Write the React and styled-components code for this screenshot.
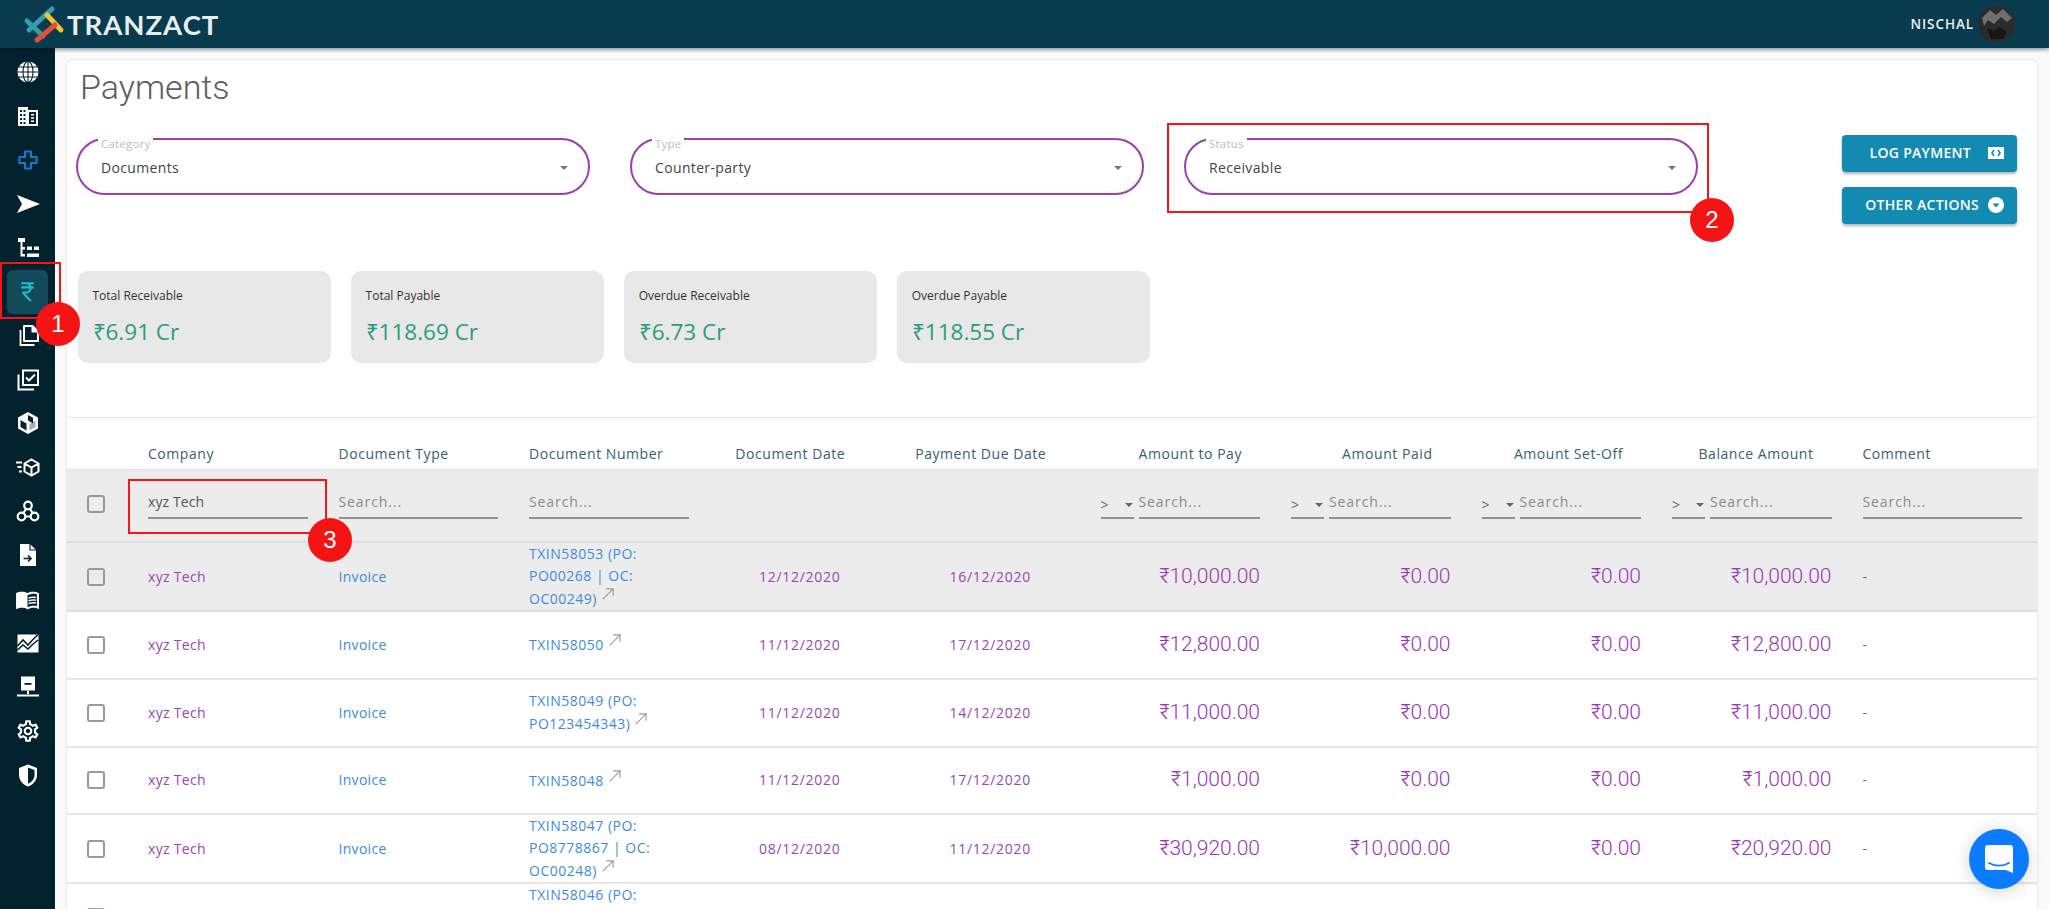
import React from 'react';
import styled, { createGlobalStyle } from 'styled-components';
import { MdCurrencyRupee, MdMenuBook, MdOutlineSettings } from 'react-icons/md';

const Global = createGlobalStyle`
  html, body { margin: 0; height: 909px; overflow: hidden; background: #fff; }
  #root { height: 909px; }
  * { box-sizing: border-box; }
`;

const Page = styled.div`
  position: relative;
  width: 2049px;
  height: 909px;
  overflow: hidden;
  display: flex;
  flex-direction: column;
  font-family: "Open Sans", sans-serif;
`;
const Header = styled.header`
  height: 48px;
  flex: none;
  background: #083b4d;
  display: flex;
  align-items: center;
  justify-content: space-between;
  padding: 0 34px 0 22px;
  box-shadow: 0 2px 4px rgba(0,0,0,.4);
  z-index: 2;
`;
const Brand = styled.div`
  display: flex;
  align-items: center;
  gap: 1px;
`;
const BrandName = styled.span`
  font-family: Lato, sans-serif;
  font-size: 27.5px;
  font-weight: 700;
  letter-spacing: 1px;
  color: #e6eef0;
`;
const User = styled.div`
  display: flex;
  align-items: center;
  gap: 5px;
`;
const UserName = styled.span`
  font-size: 13.5px;
  font-weight: 600;
  letter-spacing: .9px;
  color: #f0f0f0;
`;
const Avatar = styled.div`
  width: 36px;
  height: 36px;
  border-radius: 50%;
  overflow: hidden;
  background: #2c2c2c;
`;
const Body = styled.div`
  flex: 1;
  display: flex;
  min-height: 0;
`;
const Sidebar = styled.nav`
  width: 55px;
  flex: none;
  background: #02232e;
  display: flex;
  flex-direction: column;
  align-items: center;
  padding-top: 2px;
`;
const NavItem = styled.div`
  width: 41px;
  height: 43.95px;
  flex: none;
  display: flex;
  align-items: center;
  justify-content: center;
  border-radius: 6px;
  color: ${p => (p.$active ? '#25b9d0' : '#fff')};
  background: ${p => (p.$active ? '#124a59' : 'transparent')};
  svg { display: block; }
`;
const Main = styled.main`
  flex: 1;
  min-width: 0;
  padding: 12px 12px 0;
  background: #fbfbfb;
`;
const Card = styled.section`
  background: #fff;
  height: 100%;
  border-radius: 6px 6px 0 0;
  box-shadow: 0 0 3px rgba(0,0,0,.18);
  padding-top: 7px;
  overflow: hidden;
`;
const Title = styled.h1`
  margin: 0 0 0 13px;
  font-family: Roboto, sans-serif;
  font-weight: 300;
  font-size: 34px;
  line-height: 40px;
  color: #5c5c5c;
`;
const FilterRow = styled.div`
  display: flex;
  align-items: flex-start;
  margin-top: 28px;
  padding: 0 20px 0 9px;
`;
const SelectBox = styled.div`
  position: relative;
  width: 513.5px;
  height: 57px;
  margin: 3px 40.5px 0 0;
  border: 2px solid #9c3fae;
  border-radius: 29px;
  display: flex;
  align-items: center;
  justify-content: space-between;
  padding: 2px 20px 0 23px;
  font-size: 14px;
  letter-spacing: .35px;
  color: #444;
`;
const SelectLabel = styled.span`
  position: absolute;
  top: -3px;
  left: 20px;
  padding: 0 3px;
  background: #fff;
  font-size: 11.5px;
  line-height: 13px;
  letter-spacing: .2px;
  color: #bcbcbc;
`;
const Caret = styled.span`
  width: 0;
  height: 0;
  border-left: 4px solid transparent;
  border-right: 4px solid transparent;
  border-top: 4px solid #777;
`;
const Actions = styled.div`
  margin-left: auto;
  display: flex;
  flex-direction: column;
  gap: 15px;
`;
const ActionButton = styled.button`
  width: 175px;
  height: 37px;
  border: 0;
  border-radius: 4px;
  background: #138ab1;
  color: #fff;
  font-family: "Open Sans", sans-serif;
  font-size: 14px;
  font-weight: 600;
  letter-spacing: .3px;
  display: flex;
  align-items: center;
  justify-content: flex-end;
  gap: ${p => p.$gap}px;
  padding: 0 13px 2px 0;
  box-shadow: 0 2px 3px rgba(0,0,0,.3);
`;
const Stats = styled.div`
  display: flex;
  gap: 20.6px;
  margin: 47px 0 0 11px;
`;
const Stat = styled.div`
  width: 252.5px;
  height: 92px;
  background: #e8e8e8;
  border-radius: 10px;
  padding: 16px 15px 0 14.5px;
`;
const StatLabel = styled.div`
  font-size: 12px;
  line-height: 18px;
  color: #333;
`;
const StatValue = styled.div`
  margin-top: 13px;
  font-size: 22.5px;
  line-height: 28px;
  color: #2a9d7f;
`;
const Divider = styled.hr`
  border: 0;
  height: 1px;
  background: #e6e6e6;
  margin: 54px 0 22px;
`;
const Table = styled.table`
  table-layout: fixed;
  width: 1971px;
  border-collapse: separate;
  border-spacing: 0;
`;
const Col = styled.col`
  width: ${p => p.$w}px;
`;
const Th = styled.th`
  height: 30px;
  padding: 0 ${p => (p.$hidden ? 34 : 15)}px 2px 15px;
  font-size: 14px;
  font-weight: 400;
  letter-spacing: .55px;
  color: #36606f;
  text-align: ${p => p.$align || 'left'};
  white-space: nowrap;
  border-bottom: 1px solid #e3e3e3;
`;
const FilterCell = styled.td`
  height: 73px;
  padding: 0 16px 3px 15px;
  background: #ececec;
  border-bottom: 2px solid #dcdcdc;
  vertical-align: middle;
`;
const BodyCell = styled.td`
  height: 67.8px;
  padding: 0 15px;
  background: ${p => (p.$hl ? '#ececec' : '#fff')};
  border-bottom: 2px solid ${p => (p.$hl ? '#dcdcdc' : '#e6e6e6')};
  font-size: 14px;
  line-height: 22px;
  letter-spacing: ${p => p.$ls || 0.3}px;
  vertical-align: ${p => p.$valign || 'middle'};
  text-align: ${p => p.$align || 'left'};
  color: ${p => (p.$blue ? '#3e8bdc' : '#9a45b6')};
`;
const CheckCell = styled.div`
  width: 18px;
  height: 18px;
  margin-left: 20px;
  border: 2px solid #9a9a9a;
  border-radius: 3px;
  background: transparent;
`;
const Amount = styled.span`
  font-family: Roboto, sans-serif;
  font-weight: 300;
  font-size: 21px;
  letter-spacing: 0;
  margin-right: 1px;
  color: #9a35b5;
`;
const LinkOut = styled.svg`
  width: 14px;
  height: 14px;
  margin-left: 4px;
  vertical-align: 3px;
`;
const FilterInput = styled.input`
  display: block;
  width: 100%;
  height: 30px;
  min-width: 0;
  padding: 0 0 4px;
  border: 0;
  border-bottom: 2px solid #919191;
  background: transparent;
  font-family: "Open Sans", sans-serif;
  font-size: 14px;
  letter-spacing: .1px;
  color: #555;
  outline: none;
  &::placeholder { color: #8a8a8a; opacity: 1; letter-spacing: .9px; }
`;
const NumericFilter = styled.div`
  display: flex;
  gap: 5px;
`;
const Comparator = styled.div`
  width: 33px;
  flex: none;
  height: 30px;
  border-bottom: 2px solid #919191;
  display: flex;
  align-items: center;
  justify-content: space-between;
  font-size: 14px;
  color: #666;
  padding-top: 3px;
`;
const MiniCaret = styled.span`
  width: 0;
  height: 0;
  margin-right: 1px;
  border-left: 4px solid transparent;
  border-right: 4px solid transparent;
  border-top: 4px solid #666;
`;
const Marker = styled.div`
  position: absolute;
  left: ${p => p.$x}px;
  top: ${p => p.$y}px;
  width: ${p => p.$w}px;
  height: ${p => p.$h}px;
  border: 2.5px solid #f5141c;
  pointer-events: none;
`;
const Badge = styled.div`
  position: absolute;
  left: ${p => p.$x - 22}px;
  top: ${p => p.$y - 22}px;
  width: 44px;
  height: 44px;
  border-radius: 50%;
  background: #f51414;
  color: #fff;
  font-family: "Liberation Sans", Arial, sans-serif;
  font-size: 24px;
  display: flex;
  align-items: center;
  justify-content: center;
`;
const Chat = styled.div`
  position: absolute;
  left: 1969px;
  top: 829px;
  width: 60px;
  height: 60px;
  border-radius: 50%;
  background: #0b7cff;
  box-shadow: 0 2px 16px rgba(0,0,0,.18);
  display: flex;
  align-items: center;
  justify-content: center;
`;

const S = ({ children }) => (
  <svg width="24" height="24" viewBox="0 0 24 24" fill="currentColor">{children}</svg>
);
const DARK = '#02232e';
const navIcons = [
  <S><circle cx="12" cy="12" r="10.5" /><g fill="none" stroke={DARK} strokeWidth="1.1"><ellipse cx="12" cy="12" rx="5" ry="10.5" /><path d="M12 1.5v21M1.5 12h21M3 7h18M3 17h18" /></g></S>,
  <S><path d="M2 3h10v3h10v16H2z" /><g fill={DARK}><path d="M4 6h2v2H4zM7.5 6h2v2h-2zM4 10h2v2H4zM7.5 10h2v2h-2zM4 14h2v2H4zM7.5 14h2v2h-2zM4 18h2v2H4zM7.5 18h2v2h-2zM13 8h7v12h-7z" /></g><path d="M15 10h3v1.6h-3zM15 13.2h3v1.6h-3zM15 16.4h3V18h-3z" /></S>,
  <S><path d="M9 3.5h6V9h5.5v6H15v5.5H9V15H3.5V9H9z" fill="none" stroke="#1a78d2" strokeWidth="2.2" strokeLinejoin="round" /></S>,
  <S><path d="M1 3l23 9-23 9 5-9z" /></S>,
  <S><path d="M2 2h7v4H6.5v5H9v2.5H6.5V18H9v2.5H4.5V6H2z" /><path d="M11 10.5h5v3.5h-5zM18 10.5h5v3.5h-5zM11 17.5h12v3.5H11z" /></S>,
  <MdCurrencyRupee size={25} />,
  <S><path d="M8 2h8.5L22 7.5V17H8z" fill="none" stroke="currentColor" strokeWidth="2" strokeLinejoin="round" /><path d="M15.5 1.5L22.5 8.5h-7z" /><path d="M4.5 6v15h14" fill="none" stroke="currentColor" strokeWidth="1.8" /></S>,
  <S><path d="M7 2.5h15V17H7z" fill="none" stroke="currentColor" strokeWidth="2" /><path d="M10 9.5l3 3 6-6" fill="none" stroke="currentColor" strokeWidth="2" /><path d="M2.5 6.5V21.5H18" fill="none" stroke="currentColor" strokeWidth="2" /></S>,
  <S><path d="M12 1l10 5.5v11L12 23 2 17.5v-11z" /><path d="M12 4l5 2.8v5.6L12 9.6z" fill={DARK} /><path d="M4.5 9l6 3.4v7l-6-3.4z" fill={DARK} /><path d="M19.5 9.5v6.5l-6 3.4v-6.5z" fill={DARK} opacity=".35" /></S>,
  <S><g fill="none" stroke="currentColor" strokeWidth="2"><path d="M15.5 4.5l7 4v8l-7 4-7-4v-8zM8.5 8.5l7 4 7-4M15.5 12.5v8" /><path d="M0 7.5h6M1.5 12h4M3 16.5h3" /></g></S>,
  <S><g fill="none" stroke="currentColor" strokeWidth="2.2"><circle cx="12" cy="6.5" r="3.8" /><circle cx="5.5" cy="17.5" r="3.8" /><circle cx="18.5" cy="17.5" r="3.8" /><path d="M10 10l-3 4.5M14 10l3 4.5M9.3 17.5h5.4" /></g></S>,
  <S><path d="M4 1h10l6 6v16H4z" /><path d="M14 1v6h6" fill="none" stroke={DARK} strokeWidth="1.2" /><path d="M7.5 15.5h7M12 12.5l3 3-3 3" fill="none" stroke={DARK} strokeWidth="1.6" /></S>,
  <MdMenuBook size={25} />,
  <S><path d="M1.5 3.5h21v18h-21z" /><path d="M1.5 15l5.5-6 5 5 4-4.5 6-6" fill="none" stroke={DARK} strokeWidth="1.6" /><path d="M1.5 19l5.5-5 5 4 4-4 6-5" fill="none" stroke={DARK} strokeWidth="1.6" /></S>,
  <S><path d="M5 1.5h14v14H5z" /><path d="M8.5 8h7v1.8h-7z" fill={DARK} /><path d="M11 15.5h2v3.5h-2z" /><path d="M1 19.5h22v2H1z" /></S>,
  <MdOutlineSettings size={26} />,
  <S><path d="M12 1.5l9 3.5v7c0 5.5-3.8 9.5-9 11.5-5.2-2-9-6-9-11.5V5z" /><path d="M12 4.5l6.5 2.5v5c0 4-2.6 7-6.5 8.8z" fill={DARK} /></S>
];

const LinkArrow = () => (
  <LinkOut viewBox="0 0 15 15" fill="none" stroke="#9a9a9a" strokeWidth="1.2">
    <path d="M2 13L13 2M5.5 2H13v7.5" />
  </LinkOut>
);

const columns = [
  ['Company'], ['Document Type'], ['Document Number'],
  ['Document Date', 'center'], ['Payment Due Date', 'center'],
  ['Amount to Pay', 'right'], ['Amount Paid', 'right'],
  ['Amount Set-Off', 'right'], ['Balance Amount', 'right'], ['Comment']
];
const rows = [
  { hl: true, doc: 'TXIN58053 (PO: PO00268 | OC: OC00249)', d: '12/12/2020', due: '16/12/2020', a: '₹10,000.00', p: '₹0.00', s: '₹0.00', b: '₹10,000.00' },
  { doc: 'TXIN58050', d: '11/12/2020', due: '17/12/2020', a: '₹12,800.00', p: '₹0.00', s: '₹0.00', b: '₹12,800.00' },
  { doc: 'TXIN58049 (PO: PO123454343)', d: '11/12/2020', due: '14/12/2020', a: '₹11,000.00', p: '₹0.00', s: '₹0.00', b: '₹11,000.00' },
  { doc: 'TXIN58048', d: '11/12/2020', due: '17/12/2020', a: '₹1,000.00', p: '₹0.00', s: '₹0.00', b: '₹1,000.00' },
  { doc: 'TXIN58047 (PO: PO8778867 | OC: OC00248)', d: '08/12/2020', due: '11/12/2020', a: '₹30,920.00', p: '₹10,000.00', s: '₹0.00', b: '₹20,920.00' }
];
const selects = [['Category', 'Documents'], ['Type', 'Counter-party'], ['Status', 'Receivable']];
const stats = [
  ['Total Receivable', '₹6.91 Cr'], ['Total Payable', '₹118.69 Cr'],
  ['Overdue Receivable', '₹6.73 Cr'], ['Overdue Payable', '₹118.55 Cr']
];

const NumFilter = () => (
  <NumericFilter>
    <Comparator>&gt;<MiniCaret /></Comparator>
    <FilterInput placeholder="Search..." />
  </NumericFilter>
);

export default function App() {
  return (
    <Page>
      <Global />
      <Header>
        <Brand>
          <svg width="44" height="40" viewBox="0 0 44 40" fill="none" strokeWidth="5" strokeLinecap="round">
            <path d="M5 17l16 15" stroke="#2aa59a" />
            <path d="M7 26L30 5" stroke="#3a9bb5" />
            <path d="M25 11l14 15" stroke="#f2c230" />
            <path d="M15 36l18-15" stroke="#e0503a" />
          </svg>
          <BrandName>TRANZACT</BrandName>
        </Brand>
        <User>
          <UserName>NISCHAL</UserName>
          <Avatar>
            <svg width="36" height="36" viewBox="0 0 36 36">
              <rect width="36" height="36" fill="#2b2b2b" />
              <path d="M3 12l8-8 6 5 7-6 9 9-5 4-6-5-7 7-6-4-4 6z" fill="#6f6f6f" />
              <path d="M8 22l7 3 5-4 8 5-4 7H12z" fill="#161616" />
            </svg>
          </Avatar>
        </User>
      </Header>
      <Body>
        <Sidebar>
          {navIcons.map((ic, i) => (
            <NavItem key={i} $active={i === 5}>{ic}</NavItem>
          ))}
        </Sidebar>
        <Main>
          <Card>
            <Title>Payments</Title>
            <FilterRow>
              {selects.map(([l, v]) => (
                <SelectBox key={l}>
                  <SelectLabel>{l}</SelectLabel>
                  {v}
                  <Caret />
                </SelectBox>
              ))}
              <Actions>
                <ActionButton $gap={17}>
                  LOG PAYMENT
                  <svg width="16" height="12" viewBox="0 0 16 12"><path d="M0 0h16v12H0z" fill="#fff" /><path d="M6 3L4 6l2 3M10 3l2 3-2 3" stroke="#138ab1" strokeWidth="1.6" fill="none" /></svg>
                </ActionButton>
                <ActionButton $gap={9}>
                  OTHER ACTIONS
                  <svg width="16" height="16" viewBox="0 0 16 16"><circle cx="8" cy="8" r="8" fill="#fff" /><path d="M4.5 6.5h7L8 10.5z" fill="#138ab1" /></svg>
                </ActionButton>
              </Actions>
            </FilterRow>
            <Stats>
              {stats.map(([l, v]) => (
                <Stat key={l}>
                  <StatLabel>{l}</StatLabel>
                  <StatValue>{v}</StatValue>
                </Stat>
              ))}
            </Stats>
            <Divider />
            <Table>
              <colgroup>
                <Col $w={66} />
                {columns.map(([c]) => <Col key={c} $w={190.5} />)}
              </colgroup>
              <thead>
                <tr>
                  <Th />
                  {columns.map(([c, al]) => (
                    <Th key={c} $align={al} $hidden={!!al}>{c}</Th>
                  ))}
                </tr>
                <tr>
                  <FilterCell style={{ padding: '0 0 3px' }}><CheckCell /></FilterCell>
                  <FilterCell><FilterInput defaultValue="xyz Tech" /></FilterCell>
                  <FilterCell><FilterInput placeholder="Search..." /></FilterCell>
                  <FilterCell><FilterInput placeholder="Search..." /></FilterCell>
                  <FilterCell />
                  <FilterCell />
                  <FilterCell><NumFilter /></FilterCell>
                  <FilterCell><NumFilter /></FilterCell>
                  <FilterCell><NumFilter /></FilterCell>
                  <FilterCell><NumFilter /></FilterCell>
                  <FilterCell><FilterInput placeholder="Search..." /></FilterCell>
                </tr>
              </thead>
              <tbody>
                {rows.map(r => (
                  <tr key={r.doc}>
                    <BodyCell $hl={r.hl} style={{ padding: 0 }}><CheckCell /></BodyCell>
                    <BodyCell $hl={r.hl}>xyz Tech</BodyCell>
                    <BodyCell $hl={r.hl} $blue>Invoice</BodyCell>
                    <BodyCell $hl={r.hl} $blue $ls={0.5}>{r.doc}<LinkArrow /></BodyCell>
                    <BodyCell $hl={r.hl} $align="center" $ls={0.7}>{r.d}</BodyCell>
                    <BodyCell $hl={r.hl} $align="center" $ls={0.7}>{r.due}</BodyCell>
                    <BodyCell $hl={r.hl} $align="right"><Amount>{r.a}</Amount></BodyCell>
                    <BodyCell $hl={r.hl} $align="right"><Amount>{r.p}</Amount></BodyCell>
                    <BodyCell $hl={r.hl} $align="right"><Amount>{r.s}</Amount></BodyCell>
                    <BodyCell $hl={r.hl} $align="right"><Amount>{r.b}</Amount></BodyCell>
                    <BodyCell $hl={r.hl}>-</BodyCell>
                  </tr>
                ))}
                <tr>
                  <BodyCell style={{ padding: 0 }}><CheckCell /></BodyCell>
                  <BodyCell />
                  <BodyCell />
                  <BodyCell $blue $ls={0.5} $valign="top">TXIN58046 (PO:</BodyCell>
                </tr>
              </tbody>
            </Table>
          </Card>
        </Main>
      </Body>

      <Marker $x={0} $y={262} $w={61} $h={57} />
      <Marker $x={1167} $y={123} $w={542} $h={90} />
      <Marker $x={128} $y={479} $w={199} $h={55} />
      <Badge $x={58} $y={324}>1</Badge>
      <Badge $x={1712} $y={220}>2</Badge>
      <Badge $x={330} $y={540}>3</Badge>
      <Chat>
        <svg width="30" height="32" viewBox="0 0 30 32">
          <path d="M4 2h22a3 3 0 0 1 3 3v25l-7-3H4a3 3 0 0 1-3-3V5a3 3 0 0 1 3-3z" fill="#fff" />
          <path d="M5 20c6 3.5 14 3.5 20 0" fill="none" stroke="#0b7cff" strokeWidth="1.8" strokeLinecap="round" />
        </svg>
      </Chat>
    </Page>
  );
}
